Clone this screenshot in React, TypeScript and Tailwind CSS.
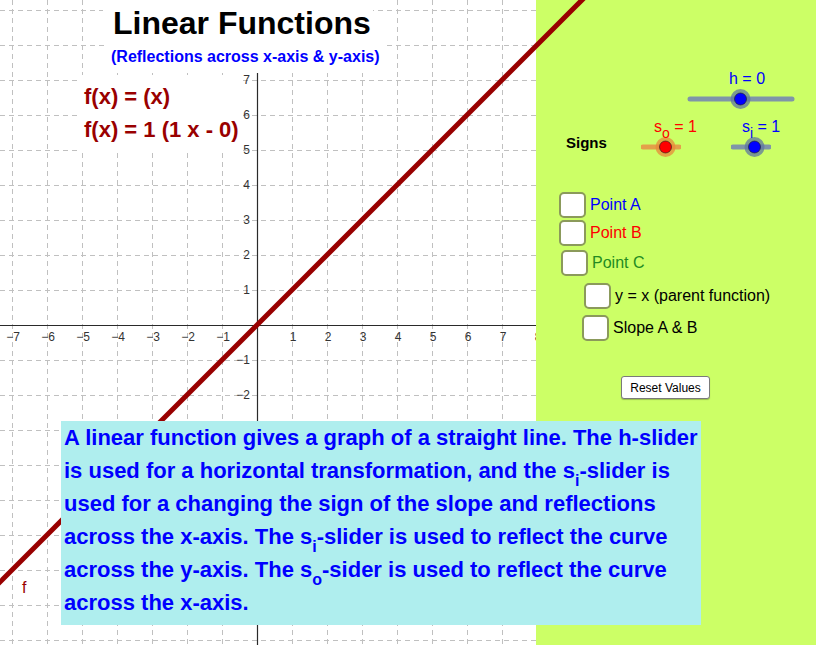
import React from "react"

const ORIGIN_X = 257
const ORIGIN_Y = 325
const STEP = 35

const vLines = Array.from({ length: 16 }, (_, k) => 12 + STEP * k)
const hLines = Array.from({ length: 19 }, (_, k) => 10 + STEP * k)
const xTicks = [-7, -6, -5, -4, -3, -2, -1, 1, 2, 3, 4, 5, 6, 7, 8]
// labels further down sit under the text box
const yTicks = [7, 6, 5, 4, 3, 2, 1, -1, -2]

function fmt(n: number) {
  return n < 0 ? `\u2212${-n}` : `${n}`
}

function GraphGrid() {
  return (
    <svg width={536} height={645} className="block">
      {vLines.map((x) => (
        <line key={`v${x}`} x1={x + 0.5} y1={0} x2={x + 0.5} y2={645} stroke="#c0c0c0" strokeDasharray="5 4" />
      ))}
      {hLines.map((y) => (
        <line key={`h${y}`} x1={0} y1={y + 0.5} x2={536} y2={y + 0.5} stroke="#c0c0c0" strokeDasharray="5 4" />
      ))}
      <line x1={0} y1={ORIGIN_Y + 0.5} x2={536} y2={ORIGIN_Y + 0.5} stroke="#2a2a2a" strokeWidth={1.2} />
      <line x1={ORIGIN_X + 0.5} y1={0} x2={ORIGIN_X + 0.5} y2={645} stroke="#2a2a2a" strokeWidth={1.2} />
      <g fontFamily="'Liberation Sans', Arial, sans-serif" fontSize={12} fill="#333">
        {xTicks.map((n) => (
          <text key={`x${n}`} x={ORIGIN_X + STEP * n + 1} y={341} textAnchor="middle">
            {fmt(n)}
          </text>
        ))}
        {yTicks.map((n) => (
          <text key={`y${n}`} x={250} y={ORIGIN_Y - STEP * n + 4} textAnchor="end">
            {fmt(n)}
          </text>
        ))}
      </g>
    </svg>
  )
}

function SliderTrack({ width, trackFrom, knob, track, halo, fill }: {
  width: number
  trackFrom: number
  knob: number
  track: string
  halo: string
  fill: string
}) {
  const trackTo = width - trackFrom
  return (
    <svg width={width} height={22} className="block">
      <line x1={trackFrom} y1={11} x2={trackTo} y2={11} stroke={track} strokeWidth={5} strokeLinecap="round" />
      <circle cx={knob} cy={11} r={10} fill={halo} fillOpacity={0.75} />
      <circle cx={knob} cy={11} r={6} fill={fill} stroke="#1a1a1a" strokeOpacity={0.6} strokeWidth={1} />
    </svg>
  )
}

function Check({ label, color, indent, top }: { label: string; color: string; indent: number; top: number }) {
  return (
    <div className="flex items-center" style={{ marginLeft: indent, marginTop: top }}>
      <div className="w-[27px] h-[26px] rounded-[5px] border-2 border-[#8b9a5b] bg-white" />
      <span className="ml-[4px] text-[16px] leading-[20px]" style={{ color }}>
        {label}
      </span>
    </div>
  )
}

export default function App() {
  return (
    <div className="relative w-[816px] h-[645px] overflow-hidden bg-white flex font-['Liberation_Sans',Arial,sans-serif]">
      {/* graphics view */}
      <div className="relative w-[536px] h-full overflow-hidden">
        <GraphGrid />

        <div className="absolute left-[103px] top-0 w-[270px] h-[44px] bg-white">
          <div className="ml-[10px] mt-[5px] text-[32px] leading-[36px] font-bold text-black whitespace-nowrap">
            Linear Functions
          </div>
        </div>
        <div className="absolute left-[108px] top-[44px] w-[276px] h-[29px] bg-white">
          <div className="ml-[3px] mt-[3px] text-[16px] leading-[20px] font-bold text-[#0000ff] whitespace-nowrap">
            (Reflections across x-axis &amp; y-axis)
          </div>
        </div>

        <div className="absolute left-[77px] top-[75px] w-[165px] h-[77px] bg-white pl-[7px] pt-[5px] text-[22px] leading-[33px] font-bold text-[#990000] whitespace-nowrap">
          <div>f(x) = (x)</div>
          <div>f(x) = 1 (1 x - 0)</div>
        </div>

        <span className="absolute left-[22px] top-[578px] text-[16px] leading-[20px] text-[#990000]">f</span>
      </div>

      {/* controls */}
      <div className="w-[280px] h-full bg-[#ccff66] flex flex-col">
        <div className="mt-[70px] ml-[150px] w-[110px] flex flex-col">
          <span className="ml-[43px] text-[16px] leading-[18px] text-[#0000ff]">h = 0</span>
          <SliderTrack width={110} trackFrom={4} knob={54.5} track="#7f95a8" halo="#5f77a0" fill="#0000ff" />
        </div>

        <div className="mt-[8px] flex items-start">
          <span className="ml-[30px] w-[75px] mt-[16px] text-[15px] leading-[18px] font-bold text-black">Signs</span>
          <div className="w-[90px] flex flex-col">
            <span className="ml-[13px] text-[16px] leading-[18px] text-[#ff0000] whitespace-nowrap">
              s<span className="relative top-[6px] text-[14px] leading-none">o</span> = 1
            </span>
            <SliderTrack width={40} trackFrom={2} knob={24.5} track="#e3a04a" halo="#e88a3a" fill="#ff0000" />
          </div>
          <div className="flex flex-col">
            <span className="ml-[11px] text-[16px] leading-[18px] text-[#0000ff] whitespace-nowrap">
              s<span className="relative top-[6px] text-[14px] leading-none">i</span> = 1
            </span>
            <SliderTrack width={40} trackFrom={2} knob={23.5} track="#7f95a8" halo="#5f77a0" fill="#0000ff" />
          </div>
        </div>

        <Check label="Point A" color="#0000ff" indent={23} top={34} />
        <Check label="Point B" color="#ff0000" indent={23} top={2} />
        <Check label="Point C" color="#228b22" indent={25} top={4} />
        <Check label="y = x (parent function)" color="#000000" indent={48} top={7} />
        <Check label="Slope A & B" color="#000000" indent={46} top={6} />

        <button className="mt-[35px] ml-[85px] w-[89px] h-[23px] rounded-[3px] border border-[#7a7a7a] bg-white text-[12px] leading-[14px] text-black shadow-[0_1px_1px_rgba(0,0,0,0.25)]">
          Reset Values
        </button>
      </div>

      {/* graph of f over everything but the text */}
      <svg width={816} height={645} className="absolute left-0 top-0 pointer-events-none">
        <line x1={-20} y1={ORIGIN_Y + ORIGIN_X + 20} x2={620} y2={ORIGIN_Y - (620 - ORIGIN_X)} stroke="#990000" strokeWidth={5} />
      </svg>

      <div className="absolute left-[61px] top-[421px] w-[640px] h-[204px] bg-[#afeeee] pl-[3px] text-[22px] leading-[33px] font-bold text-[#0000ff] whitespace-nowrap">
        <div>A linear function gives a graph of a straight line. The h-slider</div>
        <div>
          is used for a horizontal transformation, and the s
          <span className="relative top-[8px] text-[16px] leading-none">i</span>-slider is
        </div>
        <div>used for a changing the sign of the slope and reflections</div>
        <div>
          across the x-axis. The s<span className="relative top-[8px] text-[16px] leading-none">i</span>-slider is used to reflect the curve
        </div>
        <div>
          across the y-axis. The s<span className="relative top-[8px] text-[16px] leading-none">o</span>-sider is used to reflect the curve
        </div>
        <div>across the x-axis.</div>
      </div>
    </div>
  )
}
